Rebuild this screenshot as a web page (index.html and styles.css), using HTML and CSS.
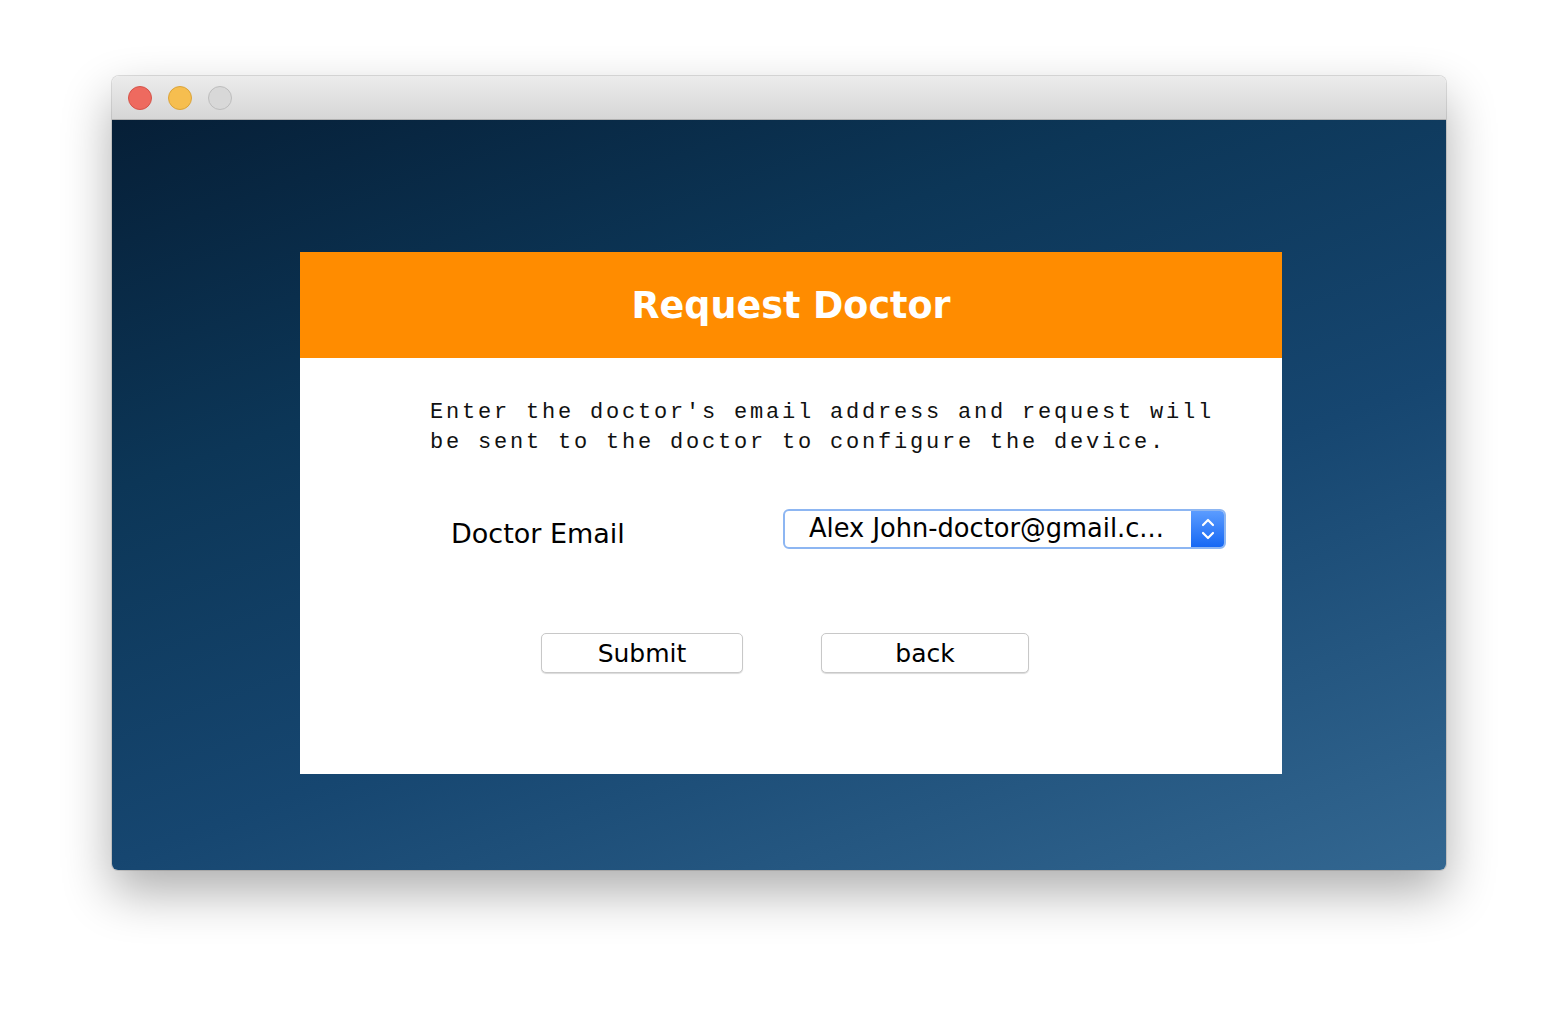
FILE: index.html
```html
<!DOCTYPE html>
<html>
<head>
<meta charset="utf-8">
<link rel="stylesheet" href="styles.css">
</head>
<body>
<div class="window">
  <div class="titlebar">
    <span class="light red"></span>
    <span class="light yellow"></span>
    <span class="light grey"></span>
  </div>
  <div class="content">
    <div class="panel">
      <div class="panel-head">Request Doctor</div>
      <div class="panel-body">
        <p class="intro">Enter the doctor's email address and request will<br>be sent to the doctor to configure the device.</p>
        <div class="field-row">
          <span class="label">Doctor Email</span>
          <div class="combo">
            <span class="combo-text">Alex John-doctor@gmail.c...</span>
            <span class="combo-btn">
              <svg width="16" height="26" viewBox="0 0 16 26"><path d="M3 9 L8 4 L13 9" fill="none" stroke="#fff" stroke-width="2.2" stroke-linecap="round" stroke-linejoin="round"/><path d="M3 17 L8 22 L13 17" fill="none" stroke="#fff" stroke-width="2.2" stroke-linecap="round" stroke-linejoin="round"/></svg>
            </span>
          </div>
        </div>
        <div class="buttons">
          <button class="btn btn-submit">Submit</button>
          <button class="btn btn-back">back</button>
        </div>
      </div>
    </div>
  </div>
</div>
</body>
</html>
```

FILE: styles.css
```css
html, body {
  margin: 0;
  padding: 0;
  background: #ffffff;
}
body {
  padding: 76px 0 0 112px;
  width: 1558px;
  height: 1018px;
  box-sizing: border-box;
  overflow: hidden;
}
.window {
  width: 1334px;
  height: 794px;
  border-radius: 7px 7px 6px 6px;
  box-shadow: 0 22px 50px rgba(0,0,0,0.32), 0 0 0 1px rgba(0,0,0,0.12);
  overflow: hidden;
  display: flex;
  flex-direction: column;
}
.titlebar {
  height: 44px;
  flex: none;
  box-sizing: border-box;
  background: linear-gradient(#ececec, #d6d6d6);
  border-bottom: 1px solid #b1b1b1;
  display: flex;
  align-items: center;
  padding-left: 16px;
  gap: 16px;
}
.light {
  width: 24px;
  height: 24px;
  border-radius: 50%;
  box-sizing: border-box;
}
.red { background: #ee6a5f; border: 1px solid #d5544a; }
.yellow { background: #f6be4f; border: 1px solid #dba43a; }
.grey { background: #d8d8d8; border: 1px solid #bdbdbd; }
.content {
  flex: 1;
  background: linear-gradient(160deg, #061f37 0%, #0c3657 30%, #164670 60%, #336791 100%);
  padding: 132px 0 0 188px;
}
.panel {
  width: 982px;
  height: 522px;
  background: #ffffff;
}
.panel-head {
  height: 106px;
  background: #ff8c00;
  color: #ffffff;
  font-family: "DejaVu Sans", sans-serif;
  font-weight: bold;
  font-size: 36.5px;
  display: flex;
  align-items: center;
  justify-content: center;
}
.panel-body {
  padding: 40px 0 0 0;
}
.intro {
  margin: 0 0 0 130px;
  font-family: "Liberation Mono", monospace;
  font-size: 22px;
  letter-spacing: 2.8px;
  line-height: 30px;
  color: #111;
}
.field-row {
  display: flex;
  align-items: center;
  margin-top: 51px;
  margin-left: 151px;
  height: 40px;
}
.label {
  width: 332px;
  font-family: "DejaVu Sans", sans-serif;
  font-size: 27px;
  color: #000;
  padding-top: 8px;
}
.combo {
  width: 443px;
  height: 40px;
  box-sizing: border-box;
  border: 2px solid #8db6f2;
  border-radius: 6px;
  display: flex;
  align-items: center;
  background: #fff;
  overflow: hidden;
}
.combo-text {
  flex: 1;
  font-family: "DejaVu Sans", sans-serif;
  font-size: 25.7px;
  color: #000;
  padding-left: 24px;
  margin-top: -3px;
}
.combo-btn {
  width: 33px;
  height: 100%;
  background: linear-gradient(#5b9cff, #1668f4);
  display: flex;
  align-items: center;
  justify-content: center;
}
.buttons {
  display: flex;
  margin-top: 84px;
  margin-left: 241px;
  gap: 78px;
}
.btn {
  height: 40px;
  box-sizing: border-box;
  background: #ffffff;
  border: 1px solid #c8c8c8;
  border-radius: 5px;
  box-shadow: 0 1px 1px rgba(0,0,0,0.15);
  font-family: "DejaVu Sans", sans-serif;
  font-size: 25px;
  color: #000;
  padding: 0;
}
.btn-submit { width: 202px; }
.btn-back { width: 208px; }
```
